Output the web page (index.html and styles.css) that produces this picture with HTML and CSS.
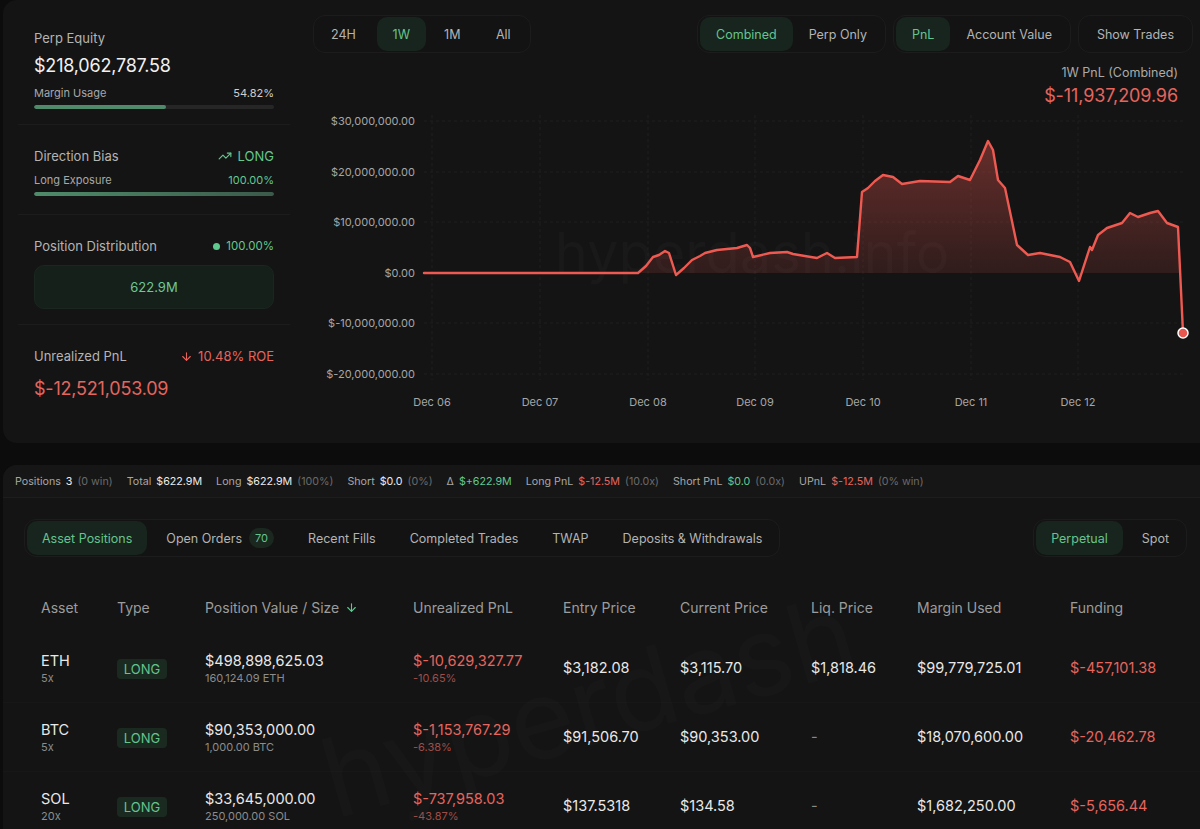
FILE: index.html
```html
<!DOCTYPE html>
<html>
<head>
<meta charset="utf-8">
<link rel="stylesheet" href="styles.css">
</head>
<body>
<div class="top-card">
  <div class="left">
    <div class="sec sec1">
      <div class="lbl">Perp Equity</div>
      <div class="big">$218,062,787.58</div>
      <div class="row small"><span>Margin Usage</span><span class="val">54.82%</span></div>
      <div class="bar"><div class="fill" style="width:54.82%"></div></div>
    </div>
    <div class="sec">
      <div class="row"><span class="lbl">Direction Bias</span>
        <span class="green flexc"><svg class="ico" viewBox="0 0 24 24" fill="none" stroke="currentColor" stroke-width="2" stroke-linecap="round" stroke-linejoin="round"><polyline points="22 7 13.5 15.5 8.5 10.5 2 17"/><polyline points="16 7 22 7 22 13"/></svg>LONG</span></div>
      <div class="row small mt"><span>Long Exposure</span><span class="green">100.00%</span></div>
      <div class="bar"><div class="fill grad" style="width:100%"></div></div>
    </div>
    <div class="sec">
      <div class="row"><span class="lbl">Position Distribution</span>
        <span class="green flexc sm13"><span class="dot"></span>100.00%</span></div>
      <div class="distbox">622.9M</div>
    </div>
    <div class="sec last">
      <div class="row"><span class="lbl">Unrealized PnL</span>
        <span class="red flexc"><svg class="ico arr" viewBox="0 0 24 24" fill="none" stroke="currentColor" stroke-width="2" stroke-linecap="round" stroke-linejoin="round"><path d="M12 5v14"/><path d="M19 12l-7 7-7-7"/></svg>10.48% ROE</span></div>
      <div class="big neg">$-12,521,053.09</div>
    </div>
  </div>
  <div class="right">
    <div class="controls">
      <div class="pill tfs">
        <button class="btn tf first">24H</button>
        <button class="btn tf active">1W</button>
        <button class="btn tf">1M</button>
        <button class="btn tf">All</button>
      </div>
      <div class="rgroups">
        <div class="pill">
          <button class="btn active">Combined</button>
          <button class="btn">Perp Only</button>
        </div>
        <div class="pill">
          <button class="btn active">PnL</button>
          <button class="btn">Account Value</button>
        </div>
        <div class="pill">
          <button class="btn">Show Trades</button>
        </div>
      </div>
    </div>
    <div class="pnlhead">
      <div class="pnllbl">1W PnL (Combined)</div>
      <div class="pnlval">$-11,937,209.96</div>
    </div>
    <svg class="chart" width="900" height="312" viewBox="300 108 900 312">
      <defs>
        <linearGradient id="g" x1="0" y1="140" x2="0" y2="273" gradientUnits="userSpaceOnUse">
          <stop offset="0" stop-color="#d9524b" stop-opacity="0.42"/>
          <stop offset="1" stop-color="#d9524b" stop-opacity="0.14"/>
        </linearGradient>
      </defs>
      <g class="grid">
        <line x1="424" y1="121" x2="1183" y2="121"/>
        <line x1="424" y1="172" x2="1183" y2="172"/>
        <line x1="424" y1="222" x2="1183" y2="222"/>
        <line x1="424" y1="323" x2="1183" y2="323"/>
        <line x1="424" y1="374" x2="1183" y2="374"/>
        <line x1="432" y1="115" x2="432" y2="380"/>
        <line x1="540" y1="115" x2="540" y2="380"/>
        <line x1="648" y1="115" x2="648" y2="380"/>
        <line x1="755" y1="115" x2="755" y2="380"/>
        <line x1="863" y1="115" x2="863" y2="380"/>
        <line x1="971" y1="115" x2="971" y2="380"/>
        <line x1="1078" y1="115" x2="1078" y2="380"/>
      </g>
      <text class="wm" x="752" y="273" text-anchor="middle">hyperdash.info</text>
      <g class="ylab">
        <text x="415" y="125">$30,000,000.00</text>
        <text x="415" y="176">$20,000,000.00</text>
        <text x="415" y="226">$10,000,000.00</text>
        <text x="415" y="277">$0.00</text>
        <text x="415" y="327">$-10,000,000.00</text>
        <text x="415" y="378">$-20,000,000.00</text>
      </g>
      <g class="xlab">
        <text x="432" y="406">Dec 06</text>
        <text x="540" y="406">Dec 07</text>
        <text x="648" y="406">Dec 08</text>
        <text x="755" y="406">Dec 09</text>
        <text x="863" y="406">Dec 10</text>
        <text x="971" y="406">Dec 11</text>
        <text x="1078" y="406">Dec 12</text>
      </g>
      <path class="area" d="M424,273 L638,273 L646,266 L653,257 L659,255 L665,251 L669,253 L676,275 L684,268 L692,260 L700,256 L705,253 L717,250 L737,248 L747,245 L750,248 L753,257 L770,253 L787,252 L793,254 L817,258 L827,253 L835,258 L857,257 L862,192 L868,188 L875,181 L883,175 L893,177 L902,184 L920,181 L950,182 L958,176 L970,180 L980,160 L988,141 L993,150 L998,180 L1005,188 L1017,245 L1028,255 L1040,253 L1060,257 L1070,262 L1079,281 L1090,247 L1092,250 L1098,235 L1107,228 L1122,223 L1130,213 L1138,217 L1150,213 L1158,211 L1167,223 L1178,227 L1180,273 Z"/>
      <path class="line" d="M424,273 L638,273 L646,266 L653,257 L659,255 L665,251 L669,253 L676,275 L684,268 L692,260 L700,256 L705,253 L717,250 L737,248 L747,245 L750,248 L753,257 L770,253 L787,252 L793,254 L817,258 L827,253 L835,258 L857,257 L862,192 L868,188 L875,181 L883,175 L893,177 L902,184 L920,181 L950,182 L958,176 L970,180 L980,160 L988,141 L993,150 L998,180 L1005,188 L1017,245 L1028,255 L1040,253 L1060,257 L1070,262 L1079,281 L1090,247 L1092,250 L1098,235 L1107,228 L1122,223 L1130,213 L1138,217 L1150,213 L1158,211 L1167,223 L1178,227 L1183,333"/>
      <circle cx="1183" cy="333" r="5" fill="#e8574f" stroke="#ffffff" stroke-width="1.5"/>
    </svg>
  </div>
</div>

<div class="bottom-card">
  <div class="stats">
    <span class="st"><span class="k">Positions</span><span class="v">3</span><span class="p">(0 win)</span></span>
    <span class="st"><span class="k">Total</span><span class="v">$622.9M</span></span>
    <span class="st"><span class="k">Long</span><span class="v">$622.9M</span><span class="p">(100%)</span></span>
    <span class="st"><span class="k">Short</span><span class="v">$0.0</span><span class="p">(0%)</span></span>
    <span class="st"><span class="k">Δ</span><span class="v green">$+622.9M</span></span>
    <span class="st"><span class="k">Long PnL</span><span class="v red">$-12.5M</span><span class="p">(10.0x)</span></span>
    <span class="st"><span class="k">Short PnL</span><span class="v green">$0.0</span><span class="p">(0.0x)</span></span>
    <span class="st"><span class="k">UPnL</span><span class="v red">$-12.5M</span><span class="p">(0% win)</span></span>
  </div>
  <div class="tabrow">
    <div class="pill tabs">
      <button class="btn tab active">Asset Positions</button>
      <button class="btn tab">Open Orders <span class="badge">70</span></button>
      <button class="btn tab">Recent Fills</button>
      <button class="btn tab">Completed Trades</button>
      <button class="btn tab">TWAP</button>
      <button class="btn tab">Deposits &amp; Withdrawals</button>
    </div>
    <div class="pill tabs">
      <button class="btn tab active">Perpetual</button>
      <button class="btn tab">Spot</button>
    </div>
  </div>
  <div class="table">
    <div class="wm2">hyperdash</div>
    <div class="tr th">
      <div>Asset</div><div>Type</div>
      <div class="flexc">Position Value / Size <svg class="ico arr2" viewBox="0 0 24 24" fill="none" stroke="currentColor" stroke-width="2" stroke-linecap="round" stroke-linejoin="round"><path d="M12 5v14"/><path d="M19 12l-7 7-7-7"/></svg></div>
      <div>Unrealized PnL</div><div>Entry Price</div><div>Current Price</div><div>Liq. Price</div><div>Margin Used</div><div>Funding</div>
    </div>
    <div class="tr">
      <div><div class="m">ETH</div><div class="s">5x</div></div>
      <div><span class="tag">LONG</span></div>
      <div><div class="m">$498,898,625.03</div><div class="s">160,124.09 ETH</div></div>
      <div><div class="m red">$-10,629,327.77</div><div class="s dred">-10.65%</div></div>
      <div class="m">$3,182.08</div>
      <div class="m">$3,115.70</div>
      <div class="m">$1,818.46</div>
      <div class="m">$99,779,725.01</div>
      <div class="m red">$-457,101.38</div>
    </div>
    <div class="tr">
      <div><div class="m">BTC</div><div class="s">5x</div></div>
      <div><span class="tag">LONG</span></div>
      <div><div class="m">$90,353,000.00</div><div class="s">1,000.00 BTC</div></div>
      <div><div class="m red">$-1,153,767.29</div><div class="s dred">-6.38%</div></div>
      <div class="m">$91,506.70</div>
      <div class="m">$90,353.00</div>
      <div class="m dim">-</div>
      <div class="m">$18,070,600.00</div>
      <div class="m red">$-20,462.78</div>
    </div>
    <div class="tr">
      <div><div class="m">SOL</div><div class="s">20x</div></div>
      <div><span class="tag">LONG</span></div>
      <div><div class="m">$33,645,000.00</div><div class="s">250,000.00 SOL</div></div>
      <div><div class="m red">$-737,958.03</div><div class="s dred">-43.87%</div></div>
      <div class="m">$137.5318</div>
      <div class="m">$134.58</div>
      <div class="m dim">-</div>
      <div class="m">$1,682,250.00</div>
      <div class="m red">$-5,656.44</div>
    </div>
  </div>
</div>
</body>
</html>
```

FILE: styles.css
```css
* { box-sizing: border-box; }
html, body { margin: 0; padding: 0; }
body {
  background: #0c0c0c;
  width: 1200px;
  height: 829px;
  overflow: hidden;
  font-family: Inter, "Liberation Sans", sans-serif;
  color: #e6e6e6;
}
button { font-family: inherit; }

.green { color: #63c890; }
.red { color: #e5655d; }
.dred { color: #9e4d49 !important; }
.dim { color: #8a8a8a; }
.flexc { display: flex; align-items: center; }

.top-card {
  margin-left: 3px;
  width: 1197px;
  height: 443px;
  background: #141414;
  border-radius: 14px 0 0 14px;
  display: flex;
}

.left {
  width: 297px;
  flex: none;
  padding: 0 10px 0 15px;
}
.sec {
  padding: 23px 16px 0 16px;
  border-bottom: 1px solid #1c1c1c;
  height: 90px;
}
.sec1 { padding-top: 30px; height: 125px; }
.sec:nth-child(3) { height: 110px; }
.sec.last { border-bottom: none; height: 118px; }

.lbl { font-size: 13px; line-height: 16px; color: #b4b4b4; }
.big { font-size: 18px; line-height: 24px; color: #f0f0f0; margin-top: 8px; letter-spacing: -0.2px; }
.big.neg { color: #e5655d; margin-top: 13px; }
.row { display: flex; justify-content: space-between; align-items: center; font-size: 13px; line-height: 16px; }
.row.small { font-size: 11px; line-height: 14px; color: #a8a8a8; margin-top: 8px; }
.row.small.mt { margin-top: 9px; }
.row.small .val { color: #cfcfcf; }
.bar { height: 4px; background: #262626; border-radius: 2px; margin-top: 5px; overflow: hidden; }
.fill { height: 100%; background: #4f8b6a; border-radius: 2px; }
.fill.grad { background: linear-gradient(90deg, #4e8c6a, #3b5a4b); }
.ico { width: 14px; height: 14px; margin-right: 6px; }
.ico.arr { width: 13px; height: 13px; margin-right: 5px; }
.sm13 { font-size: 11.5px; }
.dot { width: 7px; height: 7px; border-radius: 50%; background: #5fc98d; margin-right: 6px; }
.distbox {
  margin-top: 11px;
  height: 44px;
  border-radius: 10px;
  background: #16201b;
  border: 1px solid #1b2620;
  display: flex; align-items: center; justify-content: center;
  color: #6cc995;
  font-size: 13px;
}

.right { width: 900px; flex: none; }
.controls {
  margin-top: 15px;
  padding-left: 13px;
  display: flex;
  justify-content: space-between;
}
.rgroups { display: flex; gap: 7px; margin-right: 7px; }
.pill {
  display: flex;
  align-items: center;
  height: 38px;
  padding: 2px;
  border: 1px solid #1c1c1c;
  border-radius: 12px;
  background: #131313;
}
.btn {
  height: 34px;
  border: none;
  background: transparent;
  color: #b3b3b3;
  font-size: 12.5px;
  padding: 0 16px;
  border-radius: 10px;
  cursor: pointer;
  display: flex; align-items: center; justify-content: center;
}
.tfs { gap: 2px; }
.btn.tf { padding: 0 15px; min-width: 49px; }
.btn.tf.first { margin-right: 4px; }
.btn.active { background: #18241e; color: #64c48f; }

.pnlhead { text-align: right; padding-right: 22px; }
.pnllbl { margin-top: 12px; font-size: 12.5px; line-height: 16px; color: #aaaaaa; }
.pnlval { margin-top: 3px; font-size: 18px; line-height: 24px; color: #e5655d; letter-spacing: -0.1px; }

.chart { display: block; }
.grid line { stroke: #1f1f1f; stroke-width: 1; stroke-dasharray: 3 3; }
.ylab text { font-size: 11px; fill: #a6a6a6; text-anchor: end; font-family: Inter, sans-serif; }
.xlab text { font-size: 11px; fill: #a6a6a6; text-anchor: middle; font-family: Inter, sans-serif; }
.wm { font-size: 56px; fill: #ffffff; fill-opacity: 0.022; font-family: Inter, sans-serif; }
.area { fill: url(#g); }
.line { fill: none; stroke: #ee5a51; stroke-width: 2.4; stroke-linejoin: round; stroke-linecap: round; }

.bottom-card {
  margin-top: 22px;
  margin-left: 3px;
  width: 1197px;
  height: 400px;
  background: #141414;
  border-radius: 14px 0 0 0;
  overflow: hidden;
}
.stats {
  height: 33px;
  background: #161616;
  border-bottom: 1px solid #1d1d1d;
  display: flex;
  align-items: center;
  gap: 14px;
  padding-left: 12px;
  font-size: 10.7px;
}
.st { display: flex; gap: 5px; }
.st .k { color: #a6a6a6; }
.st .v { color: #ececec; }
.st .v.green { color: #63c890; }
.st .v.red { color: #e5655d; }
.st .p { color: #6a6a6a; }

.tabrow {
  margin-top: 21px;
  padding: 0 13px 0 21px;
  display: flex;
  justify-content: space-between;
}
.tabs { gap: 4px; }
.btn.tab { padding: 0 15px; }
.badge {
  margin-left: 7px;
  width: 25px; height: 20px;
  border-radius: 10px;
  background: #1a2820;
  color: #64c48f;
  font-size: 11px;
  display: inline-flex; align-items: center; justify-content: center;
}

.table { position: relative; margin-top: 24px; padding-left: 38px; }
.wm2 {
  position: absolute;
  left: 340px; top: 130px;
  font-size: 110px;
  color: #ffffff;
  opacity: 0.012;
  transform: rotate(-16deg);
  transform-origin: left bottom;
  pointer-events: none;
}
.tr {
  display: grid;
  grid-template-columns: 76px 88px 208px 150px 117px 131px 106px 153px 1fr;
  align-items: center;
  height: 69px;
  border-bottom: 1px solid #171717;
  margin-left: -38px;
  padding-left: 38px;
}
.tr.th { height: 53px; font-size: 14px; color: #9c9c9c; border-bottom: none; }
.arr2 { width: 13px; height: 13px; margin-left: 6px; color: #63c890; }
.m { font-size: 14.5px; line-height: 18px; color: #e8e8e8; }
.m.red { color: #e5655d; }
.m.dim { color: #8a8a8a; }
.s { font-size: 11px; line-height: 14px; color: #8c8c8c; margin-top: 1px; }
.tag {
  display: inline-flex; align-items: center; justify-content: center;
  width: 50px; height: 20px;
  background: #1a2a20;
  color: #64c48f;
  font-size: 13px;
  border-radius: 4px;
}
```
